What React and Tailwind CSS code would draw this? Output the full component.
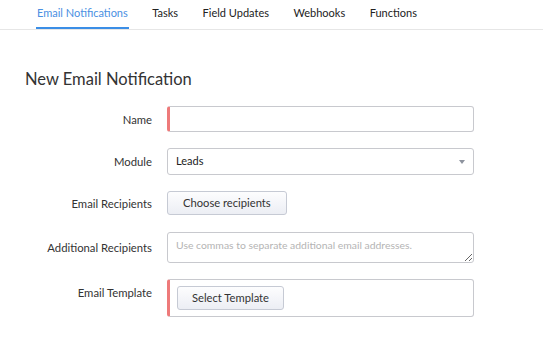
import { useState } from 'react'

const TABS = ['Email Notifications', 'Tasks', 'Field Updates', 'Webhooks', 'Functions']

function Row({ label, top, className = '', children }) {
  return (
    <div className={(top ? 'flex items-start ' : 'flex items-center ') + className}>
      <label className={'w-[152px] shrink-0 text-right text-[11.3px] leading-[17px] text-[#333] ' + (top ? 'pt-[5px]' : '')}>
        {label}
      </label>
      <div className="ml-[15px] w-[307px]">{children}</div>
    </div>
  )
}

function Btn({ children, className = '' }) {
  return (
    <button className={'block h-[24px] rounded-[3px] border border-[#c6cad4] bg-gradient-to-b from-[#fdfdfe] to-[#eceef4] text-[11.2px] text-[#333] ' + className}>
      {children}
    </button>
  )
}

export default function App() {
  const [active, setActive] = useState(0)

  return (
    <div className="h-[343px] w-[543px] bg-white font-['Lato','Noto_Sans',sans-serif] text-[#333]">
      {/* Tabs */}
      <div className="flex h-[30px] items-end border-b border-[#e6e6e6] pl-[36px]">
        {TABS.map((t, i) => (
          <button
            key={t}
            onClick={() => setActive(i)}
            className={
              'mr-[22.5px] h-[30px] border-b-2 px-px text-[11px] leading-[28px] ' +
              (active === i ? 'border-[#3b8ee6] text-[#4a90e2]' : 'border-transparent text-[#222]')
            }
          >
            {t}
          </button>
        ))}
      </div>

      <h1 className="ml-[25px] mt-[38px] text-[16.5px] leading-[22px] text-[#333]">New Email Notification</h1>

      <div className="mt-[16px] flex flex-col gap-[16px]">
        <Row label="Name">
          <input className="block h-[26px] w-full rounded-[3px] border border-[#c8c9ce] border-l-[3px] border-l-[#ee7a7a] px-2 text-[11px] outline-none" />
        </Row>

        <Row label="Module">
          <div className="flex h-[27px] items-center justify-between rounded-[3px] border border-[#c8c9ce] pl-[8px] pr-[8px] text-[11px] text-[#222]">
            <span>Leads</span>
            <span className="h-0 w-0 border-x-[3.5px] border-t-[4px] border-x-transparent border-t-[#8d939e]" />
          </div>
        </Row>

        <Row label="Email Recipients">
          <Btn className="px-[15px]">Choose recipients</Btn>
        </Row>

        <Row label="Additional Recipients" className="mt-px">
          <textarea
            placeholder="Use commas to separate additional email addresses."
            className="block h-[31px] w-full resize-y rounded-[3px] border border-[#c8c9ce] px-[8px] pt-[5px] text-[10.4px] leading-[15px] outline-none placeholder:text-[#b4b4b4]"
          />
        </Row>

        <Row label="Email Template" top>
          <div className="h-[38px] rounded-[3px] border border-[#c8c9ce] border-l-[3px] border-l-[#ee7a7a] pl-[7px] pt-[6px]">
            <Btn className="px-[14px]">Select Template</Btn>
          </div>
        </Row>
      </div>
    </div>
  )
}
